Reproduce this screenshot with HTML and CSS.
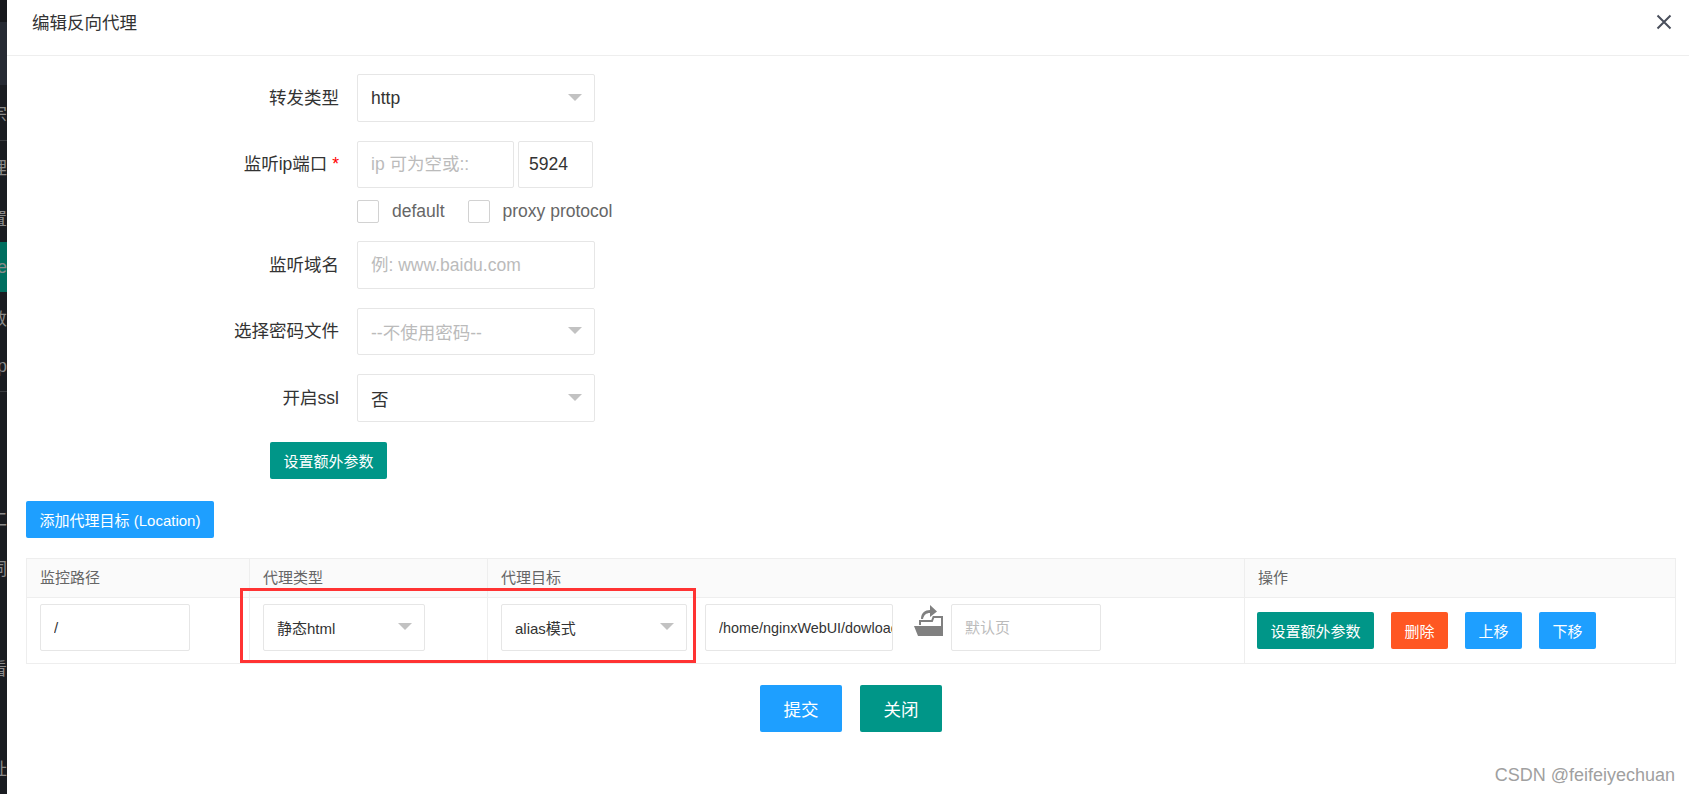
FILE: index.html
```html
<!DOCTYPE html>
<html lang="zh-CN">
<head>
  <meta charset="UTF-8">
  <title>编辑反向代理</title>
  <link rel="stylesheet" href="styles.css">
</head>
<body>

  <nav class="sidebar">
    <div class="nav-top"></div>
    <div class="nav-logo"></div>
    <div class="nav-item nav-line">宗</div>
    <div class="nav-item">理</div>
    <div class="nav-item">置</div>
    <div class="nav-item nav-active">e</div>
    <div class="nav-item">数</div>
    <div class="nav-item nav-line">lp</div>
    <div class="nav-item"></div>
    <div class="nav-item"></div>
    <div class="nav-item">仁</div>
    <div class="nav-item">词</div>
    <div class="nav-item"></div>
    <div class="nav-item">看</div>
    <div class="nav-item"></div>
    <div class="nav-item">址</div>
  </nav>

  <main class="dialog">
    <header class="dialog-head">
      <h2 class="dialog-title">编辑反向代理</h2>
      <svg class="close-icon" width="16" height="16" viewBox="0 0 16 16">
        <path d="M1.5 1.5 14.5 14.5M14.5 1.5 1.5 14.5" stroke="#4a4f5c" stroke-width="2" fill="none"/>
      </svg>
    </header>

    <form class="edit-form">
      <div class="form-row">
        <label class="form-label">转发类型</label>
        <div class="select select-wide"><span>http</span><i class="arrow"></i></div>
      </div>

      <div class="form-row">
        <label class="form-label">监听ip端口 <em class="star">*</em></label>
        <input class="input input-ip" type="text" placeholder="ip 可为空或::">
        <input class="input input-port" type="text" value="5924">
      </div>

      <div class="check-row">
        <span class="check-box"></span><span class="check-text">default</span>
        <span class="check-box"></span><span class="check-text">proxy protocol</span>
      </div>

      <div class="form-row">
        <label class="form-label">监听域名</label>
        <input class="input select-wide" type="text" placeholder="例: www.baidu.com">
      </div>

      <div class="form-row">
        <label class="form-label">选择密码文件</label>
        <div class="select select-wide"><span class="muted">--不使用密码--</span><i class="arrow"></i></div>
      </div>

      <div class="form-row">
        <label class="form-label">开启ssl</label>
        <div class="select select-wide"><span>否</span><i class="arrow"></i></div>
      </div>

      <button type="button" class="btn btn-green btn-extra">设置额外参数</button>
      <button type="button" class="btn btn-blue btn-add">添加代理目标 (Location)</button>

      <div class="table-wrap">
        <table class="target-table">
          <thead>
            <tr>
              <th class="col-path">监控路径</th>
              <th class="col-type">代理类型</th>
              <th class="col-target">代理目标</th>
              <th>操作</th>
            </tr>
          </thead>
          <tbody>
            <tr>
              <td><input class="input small input-path" type="text" value="/"></td>
              <td><div class="select small select-type"><span>静态html</span><i class="arrow"></i></div></td>
              <td>
                <div class="target-cell">
                  <div class="select small select-mode"><span>alias模式</span><i class="arrow"></i></div>
                  <input class="input small input-target" type="text" value="/home/nginxWebUI/dowload/">
                  <svg class="folder-icon" width="30" height="31" viewBox="0 0 30 31">
                    <path d="M7 20V16H19L20.500 12H29V31" fill="none" stroke="#808080" stroke-width="2"/>
                    <path d="M1 21H30V31H5Z" fill="#808080"/>
                    <path d="M8 14C8 8 12 5 17 5V0L24 6.500 17 12V8C13 8 11 10 10 14Z" fill="#808080"/>
                  </svg>
                  <input class="input small input-index" type="text" placeholder="默认页">
                </div>
              </td>
              <td>
                <div class="action-cell">
                  <button type="button" class="btn btn-green btn-small">设置额外参数</button>
                  <button type="button" class="btn btn-orange btn-small">删除</button>
                  <button type="button" class="btn btn-blue btn-small">上移</button>
                  <button type="button" class="btn btn-blue btn-small">下移</button>
                </div>
              </td>
            </tr>
          </tbody>
        </table>
        <div class="red-mark"></div>
      </div>

      <div class="form-foot">
        <button type="button" class="btn btn-blue btn-big">提交</button>
        <button type="button" class="btn btn-green btn-big">关闭</button>
      </div>
    </form>
  </main>

  <div class="watermark">CSDN @feifeiyechuan</div>

</body>
</html>
```

FILE: styles.css
```css
* {
  box-sizing: border-box;
}

body {
  margin: 0;
  height: 794px;
  overflow: hidden;
  display: flex;
  background-color: #fff;
  color: #333;
  font-family: "Liberation Sans", "Noto Sans CJK SC", sans-serif;
  font-size: 17.5px;
}

/* sidebar behind the dialog, only a sliver shows */
.sidebar {
  width: 7px;
  flex-shrink: 0;
  background-color: #1a1c21;
  overflow: hidden;
}

.nav-top {
  height: 22px;
  background-color: #16181c;
}

.nav-logo {
  height: 63px;
  background-color: #262a33;
}

.nav-item {
  height: 50px;
  display: flex;
  align-items: center;
  justify-content: flex-end;
  color: #8a8a8a;
  white-space: nowrap;
}

.nav-item:nth-child(3) {
  height: 56px;
}

.nav-item:nth-child(4) {
  height: 51px;
}

.nav-line {
  border-bottom: 1px solid #3a3c40;
}

.nav-active {
  background-color: #006e5f;
}

.dialog {
  flex: 1;
  min-width: 0;
}

.dialog-head {
  height: 56px;
  padding: 0 17px 0 25px;
  display: flex;
  align-items: center;
  justify-content: space-between;
  border-bottom: 1px solid #eee;
}

.dialog-title {
  margin: 0 0 12px;
  font-size: 17.5px;
  font-weight: normal;
}

.close-icon {
  margin-bottom: 12px;
}

.edit-form {
  padding: 18px 0 0 19px;
}

.form-row {
  display: flex;
  align-items: center;
  gap: 4px;
  margin-bottom: 19px;
}

.form-label {
  width: 313px;
  margin-right: 14px;
  padding-bottom: 3px;
  text-align: right;
  white-space: nowrap;
}

.star {
  color: #f00;
  font-style: normal;
}

.input,
.select {
  height: 47.5px;
  padding: 1px 13px 0;
  border: 1px solid #e6e6e6;
  border-radius: 2px;
  background-color: #fff;
  color: #333;
  font-family: inherit;
  font-size: 17.5px;
}

.input {
  outline: none;
}

.input::placeholder,
.muted {
  color: #bbb;
}

.select {
  display: flex;
  align-items: center;
  justify-content: space-between;
  padding-right: 12px;
}

.arrow {
  width: 0;
  height: 0;
  margin-bottom: 2px;
  border-top: 7px solid #c2c2c2;
  border-left: 7.500px solid transparent;
  border-right: 7.500px solid transparent;
}

.select-wide {
  width: 238px;
}

.input-ip {
  width: 157px;
}

.input-port {
  width: 75px;
  padding-left: 10px;
}

.check-row {
  display: flex;
  align-items: center;
  height: 23px;
  margin: -7px 0 18px 331px;
}

.check-box {
  width: 22px;
  height: 23px;
  border: 1px solid #d2d2d2;
  border-radius: 2px;
}

.check-text {
  margin: 0 23px 0 13px;
  color: #666;
}

.btn {
  border: none;
  border-radius: 2px;
  color: #fff;
  font-family: inherit;
  cursor: pointer;
  white-space: nowrap;
}

.btn-green {
  background-color: #009688;
}

.btn-blue {
  background-color: #1e9fff;
}

.btn-orange {
  background-color: #ff5722;
}

.btn-extra,
.btn-add,
.btn-small {
  height: 37px;
  padding: 0;
  font-size: 15px;
}

.btn-extra {
  display: block;
  width: 117px;
  margin: 20.500px 0 22px 244px;
}

.btn-add {
  display: block;
  width: 188px;
  margin-bottom: 20px;
}

.table-wrap {
  position: relative;
  width: 1650px;
}

.target-table {
  width: 100%;
  table-layout: fixed;
  border-collapse: collapse;
  font-size: 15px;
}

.target-table th,
.target-table td {
  border: 1px solid #eee;
  padding: 0 12px 0 13px;
  text-align: left;
}

.target-table th {
  height: 39px;
  padding-bottom: 3px;
  background-color: #fafafa;
  color: #666;
  font-weight: normal;
}

.target-table td {
  height: 66px;
}

.col-path {
  width: 223px;
}

.col-type {
  width: 238px;
}

.col-target {
  width: 757px;
}

.small {
  display: block;
  height: 47px;
  margin-bottom: 7px;
  font-size: 15px;
}

.select.small {
  display: flex;
}

.input-path {
  width: 150px;
}

.select-type {
  width: 162px;
}

.select-mode {
  width: 186px;
}

.target-cell {
  display: flex;
  align-items: center;
}

.input-target {
  width: 188px;
  margin-left: 18px;
  padding-right: 0;
  font-size: 14.400px;
}

.folder-icon {
  flex-shrink: 0;
  margin: 0 8px 20px 20px;
}

.input-index {
  width: 150px;
}

.action-cell {
  display: flex;
  gap: 17px;
  margin-left: -1px;
}

.btn-small {
  width: 57px;
}

.btn-small:first-child {
  width: 117px;
}

/* annotation drawn over the screenshot */
.red-mark {
  position: absolute;
  left: 214px;
  top: 30px;
  width: 456px;
  height: 75px;
  border: 3px solid #f33;
}

.form-foot {
  display: flex;
  justify-content: center;
  gap: 18px;
  margin-top: 21px;
  padding-right: 13px;
}

.btn-big {
  width: 82px;
  height: 47px;
  font-size: 17.5px;
}

.watermark {
  position: absolute;
  right: 14px;
  bottom: 8px;
  color: #a0a0a0;
  font-size: 18px;
}
```
